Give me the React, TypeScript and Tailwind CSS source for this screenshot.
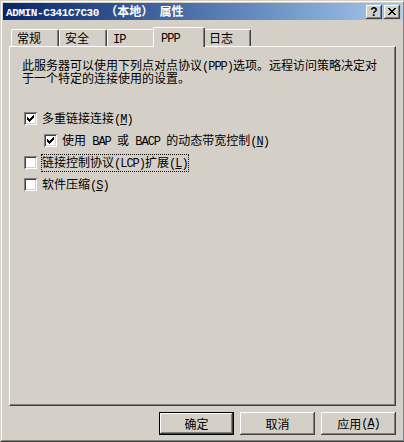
import React from "react";

function Txt({ text, bold }: { text: string; bold?: boolean }) {
  const runs = text.match(/[\x00-\x7f]+|[^\x00-\x7f]+/g) || [];
  return (
    <>
      {runs.map((r, i) => {
        if (/^[\x00-\x7f]/.test(r)) {
          const segs = r.split(/&(.)/);
          return (
            <span
              key={i}
              className={
                bold
                  ? "font-['Liberation_Mono',monospace] text-[11px] tracking-[-0.4px] whitespace-pre"
                  : "font-['Liberation_Mono',monospace] text-[12px] tracking-[-1px] whitespace-pre"
              }
            >
              {segs.map((s, j) =>
                j % 2 === 1 ? (
                  <u key={j} className="underline">
                    {s}
                  </u>
                ) : (
                  s
                )
              )}
            </span>
          );
        }
        return <span key={i}>{r}</span>;
      })}
    </>
  );
}

function Check() {
  const rows: [number, number, number][] = [
    [6, 0, 1],
    [5, 1, 2],
    [0, 2, 1],
    [4, 2, 3],
    [0, 3, 2],
    [3, 3, 3],
    [0, 4, 5],
    [1, 5, 3],
    [2, 6, 1],
  ];
  return (
    <svg width="7" height="7" viewBox="0 0 7 7" shapeRendering="crispEdges">
      {rows.map(([x, y, w], i) => (
        <rect key={i} x={x} y={y} width={w} height={1} fill="#000" />
      ))}
    </svg>
  );
}

function Box({ checked }: { checked?: boolean }) {
  return (
    <div className="w-[13px] h-[13px] shrink-0 bg-white shadow-[inset_1px_1px_0_#808080,inset_-1px_-1px_0_#fff,inset_2px_2px_0_#404040,inset_-2px_-2px_0_#d4d0c8] flex items-center justify-center">
      {checked ? <Check /> : null}
    </div>
  );
}

function CloseGlyph() {
  const px: [number, number, number][] = [
    [0, 0, 2],
    [6, 0, 2],
    [1, 1, 2],
    [5, 1, 2],
    [2, 2, 4],
    [3, 3, 2],
    [2, 4, 4],
    [1, 5, 2],
    [5, 5, 2],
    [0, 6, 2],
    [6, 6, 2],
  ];
  return (
    <svg width="8" height="7" viewBox="0 0 8 7" shapeRendering="crispEdges">
      {px.map(([x, y, w], i) => (
        <rect key={i} x={x} y={y} width={w} height={1} fill="#000" />
      ))}
    </svg>
  );
}

const capBtn =
  "w-[16px] h-[14px] bg-[#d4d0c8] shadow-[inset_-1px_-1px_0_#404040,inset_1px_1px_0_#fff,inset_-2px_-2px_0_#808080] flex items-center justify-center";

const btn =
  "w-[75px] h-[23px] bg-[#d4d0c8] flex items-center justify-center leading-[14px] shadow-[inset_-1px_-1px_0_#404040,inset_1px_1px_0_#fff,inset_-2px_-2px_0_#808080]";

export default function App() {
  return (
    <div className="w-[404px] h-[442px] overflow-hidden bg-[#d4d0c8] font-['Noto_Sans_CJK_SC',sans-serif] text-[12px] text-black">
      <div className="w-[405px] h-[442px] border border-t-[#d4d0c8] border-l-[#d4d0c8] border-r-[#404040] border-b-[#404040]">
        <div className="h-full border border-t-white border-l-white border-r-[#808080] border-b-[#808080] p-[1px] flex flex-col">
          {/* title bar */}
          <div className="h-[17px] shrink-0 bg-linear-to-r from-[#0a246a] to-[#a6caf0] flex items-center pl-[3px] pr-[2px]">
            <div className="flex-1 text-white font-bold leading-[14px] whitespace-nowrap">
              <Txt text="ADMIN-C341C7C30 " bold />
              <span>（本地）</span>
              <Txt text=" " bold />
              <span>属性</span>
            </div>
            <div className="flex gap-[2px]">
              <div className={capBtn}>
                <span className="font-['Liberation_Sans',sans-serif] font-bold text-[12px] leading-none mt-[1px]">?</span>
              </div>
              <div className={capBtn}>
                <CloseGlyph />
              </div>
            </div>
          </div>

          {/* body */}
          <div className="flex-1 flex flex-col px-[6px] pt-[7px]">
            {/* tabs */}
            <div className="h-[19px] shrink-0 flex items-end pl-[2px] leading-[14px]">
              {["常规", "安全", "IP"].map((t) => (
                <div
                  key={t}
                  className="w-[48px] h-[17px] border-t border-l border-white border-r border-r-[#404040] rounded-tl-[2px] rounded-tr-[2px] shadow-[inset_-1px_0_0_#808080] pl-[5px] pt-[1px] whitespace-nowrap"
                >
                  <Txt text={t} />
                </div>
              ))}
              <div className="relative z-10 -mx-[2px] -mb-[1px] w-[52px] h-[20px] bg-[#d4d0c8] border-t border-l border-white border-r border-r-[#404040] rounded-tl-[2px] rounded-tr-[2px] shadow-[inset_-1px_0_0_#808080] pl-[7px] pt-[2px] whitespace-nowrap">
                <Txt text="PPP" />
              </div>
              <div className="w-[48px] h-[17px] border-t border-l border-white border-r border-r-[#404040] rounded-tl-[2px] rounded-tr-[2px] shadow-[inset_-1px_0_0_#808080] pl-[5px] pt-[1px] whitespace-nowrap">
                日志
              </div>
            </div>

            {/* panel */}
            <div className="h-[360px] shrink-0 border-t border-l border-white border-r border-b border-r-[#404040] border-b-[#404040] shadow-[inset_-1px_-1px_0_#808080] pl-[12px] pt-[11px]">
              <div className="whitespace-nowrap">
                <div className="h-[13px] leading-[13px]">
                  <Txt text="此服务器可以使用下列点对点协议(PPP)选项。远程访问策略决定对" />
                </div>
                <div className="h-[13px] leading-[13px]">
                  <Txt text="于一个特定的连接使用的设置。" />
                </div>
              </div>

              <div className="mt-[28px] flex flex-col gap-[9px] leading-[13px] whitespace-nowrap">
                <div className="h-[13px] flex items-center pl-[2px]">
                  <Box checked />
                  <div className="ml-[5px]">
                    <Txt text="多重链接连接(&M)" />
                  </div>
                </div>
                <div className="h-[13px] flex items-center pl-[22px]">
                  <Box checked />
                  <div className="ml-[5px]">
                    <Txt text="使用 BAP 或 BACP 的动态带宽控制(&N)" />
                  </div>
                </div>
                <div className="h-[13px] flex items-center pl-[2px]">
                  <Box />
                  <div className="ml-[4px] border border-dotted border-black">
                    <Txt text="链接控制协议(LCP)扩展(&L)" />
                  </div>
                </div>
                <div className="h-[13px] flex items-center pl-[2px]">
                  <Box />
                  <div className="ml-[5px]">
                    <Txt text="软件压缩(&S)" />
                  </div>
                </div>
              </div>
            </div>

            {/* buttons */}
            <div className="mt-[6px] flex justify-end gap-[6px]">
              <div className={btn + " border border-black"}>确定</div>
              <div className={btn}>取消</div>
              <div className={btn}>
                <Txt text="应用(&A)" />
              </div>
            </div>
          </div>
        </div>
      </div>
    </div>
  );
}
